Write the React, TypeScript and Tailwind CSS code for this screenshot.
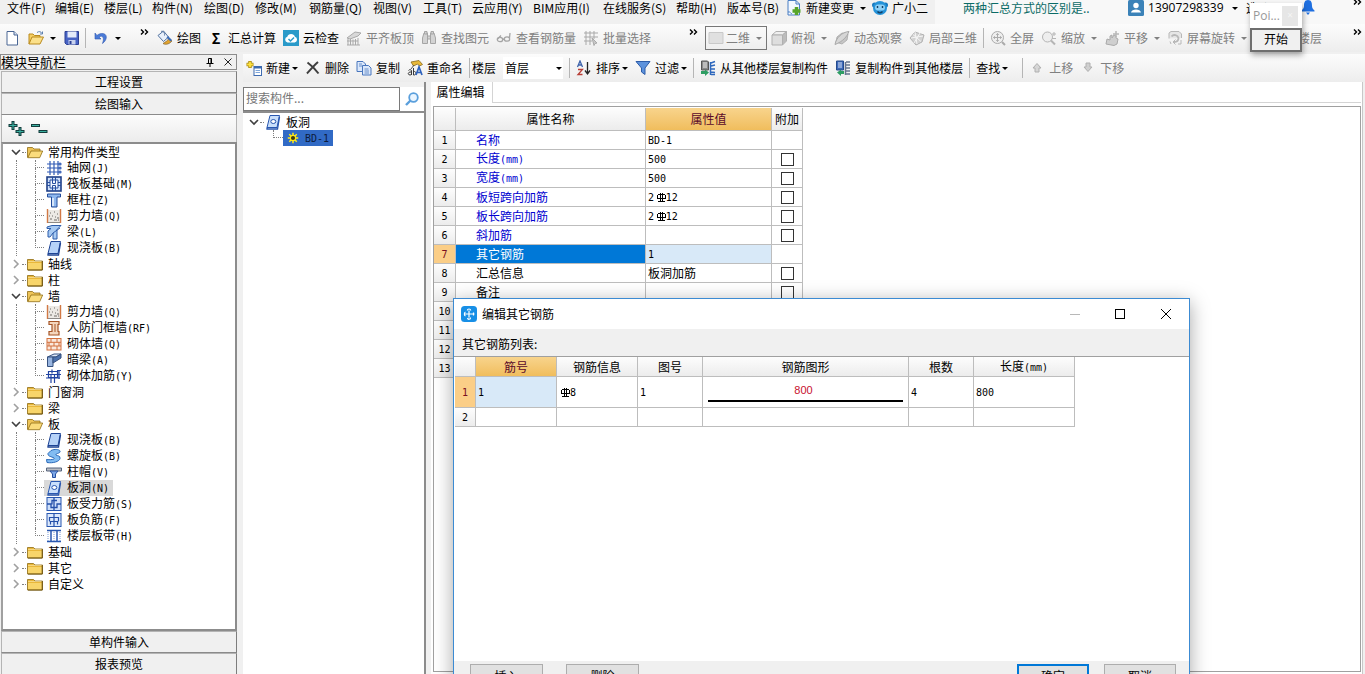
import { useState, type ReactNode } from "react";

const UI = "font-['Noto_Sans_CJK_SC',sans-serif]";

function Svg({ children, className = "size-4" }: { children: ReactNode; className?: string }) {
  return (
    <svg viewBox="0 0 16 16" fill="none" className={`shrink-0 ${className}`} aria-hidden="true">
      {children}
    </svg>
  );
}

const icons: Record<string, ReactNode> = {
  file: (
    <>
      <path d="M3 1.5h7l3.5 3.5v10H3z" fill="#fff" stroke="#4a6694" />
      <path d="M10 1.5V5h3.5" stroke="#4a6694" fill="#d5e0f2" />
    </>
  ),
  open: (
    <>
      <path d="M1 14V4h4l1.500 1.500H12V8" fill="#f6cf63" stroke="#b98a1f" />
      <path d="M1 14l3-7h11.500l-3.500 7z" fill="#fbe08a" stroke="#b98a1f" />
      <path d="M9 2.500c2-1.500 4-1 5 1M14.500 1.500v2.500h-2.500" stroke="#5b7fae" />
    </>
  ),
  save: (
    <>
      <path d="M1 1.500h13.500v13H2.500L1 13z" fill="#4763c4" stroke="#2b3f94" />
      <path d="M3.500 1.500h9v6h-9z" fill="#e4ebfa" />
      <path d="M4.500 10h7v4.500h-7z" fill="#c8d2ee" />
      <path d="M5.500 11h2v3h-2z" fill="#2b3f94" />
    </>
  ),
  undo: <path d="M2 3v6h6L6 7c3-2 6 0 3.500 6.500C15 9.500 14.500 3 8.500 3.500 6.500 3.700 5 4.500 4 5.500z" fill="#4a7bd8" stroke="#2f57b0" strokeWidth=".6" />,
  paint: (
    <>
      <path d="M1 5.500L6.500 1l5 6-5 4.500z" fill="#e8f0fb" stroke="#51719f" />
      <path d="M4 1.500c2-1 4 1 3.500 4" stroke="#51719f" />
      <path d="M6 13.500c3 2 7 0 9-2.500l-3-3c-1 3-4 4-6 5.500z" fill="#e2a32c" stroke="#80602c" strokeWidth=".7" />
      <path d="M11 6l4 4-1.500 1.500-4-4z" fill="#3c6cb8" />
    </>
  ),
  cloud: (
    <>
      <rect width="16" height="16" fill="#2a9ac9" />
      <path d="M4.500 12.500a3 3 0 01-.2-5.800 4 4 0 017.600 0 3 3 0 01-.2 5.800z" fill="#fff" />
      <path d="M5.500 9l2 2 3.500-3.500" stroke="#2a9ac9" strokeWidth="1.500" />
    </>
  ),
  alignTop: (
    <g stroke="#a9a9a9">
      <path d="M1 8l8-6 6 1-3 3-8 3z" fill="#d8d8d8" />
      <path d="M2 9v6M4.500 9v6M7 9.500V15M9.500 9v6M12 8v7M1 15h13" />
      <path d="M1 11h11" />
    </g>
  ),
  find: (
    <g fill="#d3d3d3" stroke="#a5a5a5">
      <path d="M3 3h3.500v10.500h-5V8zM13 3H9.500v10.500h5V8z" />
      <path d="M6.500 6h3v3h-3zM3.500 1.500h2.500V4H3.500zM10 1.500h2.500V4H10z" />
    </g>
  ),
  glasses: (
    <g stroke="#a5a5a5" strokeWidth="1.300">
      <ellipse cx="4" cy="9.500" rx="2.700" ry="2.200" />
      <ellipse cx="11" cy="9" rx="2.700" ry="2.200" />
      <path d="M6.500 9.500L8.500 9M1.500 9L5 5.500M13.500 8l.5-5" />
    </g>
  ),
  batch: (
    <g stroke="#a9a9a9">
      <path d="M1 3h14M1 7h14M1 11h8M3 1v14M7 1v14M11 1v8" />
      <path d="M9 8l5 5-2 .5L11 15.500z" fill="#c8c8c8" />
    </g>
  ),
  screen: <path d="M1 2.500h14v11H1z" fill="#e0e0e0" stroke="#c9c9c9" />,
  cube: (
    <>
      <path d="M1 5l4-3.500h10.500L11.500 5z" fill="#efefef" stroke="#b0b0b0" />
      <path d="M1 5h10.500v10H1z" fill="#dedede" stroke="#b0b0b0" />
      <path d="M11.500 5l4-3.500v9.500l-4 4z" fill="#bcbcbc" stroke="#b0b0b0" />
    </>
  ),
  orbit: (
    <>
      <path d="M3 7l5-4 6 1-1 6-5 4-6-2z" fill="#c6c6c6" stroke="#b2b2b2" />
      <path d="M1 14.500C2 8 8 2 15 1.500c-2 5-6 10-14 13z" fill="#d6d6d6" stroke="#a8a8a8" />
    </>
  ),
  local3d: (
    <>
      <path d="M1 8l5-6 9 3-2 7-6 3z" fill="#d2d2d2" stroke="#b2b2b2" />
      <path d="M4 4.500l8 7M6 2l2 12M2 8l12-2M11 3L5 13" stroke="#f5f5f5" />
    </>
  ),
  full: (
    <g stroke="#ababab">
      <circle cx="7.500" cy="7.500" r="6" fill="#eee" />
      <path d="M7.500 3.500v8M3.500 7.500h8M6.300 5l1.200-1.500L8.700 5M6.300 10l1.200 1.500L8.700 10M5 6.300L3.500 7.500 5 8.700M10 6.300l1.500 1.200L10 8.700" />
      <path d="M12 12l3 3" strokeWidth="2" />
    </g>
  ),
  zoom: (
    <g stroke="#b5b5b5">
      <circle cx="6.500" cy="7" r="5" fill="#eee" />
      <path d="M10 10.500l4 4" strokeWidth="2" />
      <path d="M11 4h4M13 2v4M11 8.500h4" />
    </g>
  ),
  pan: (
    <>
      <path d="M2 14l1-5 3 1V6l2-1v3l2-3 2 1v2l2 1-1 5-3 1.500z" fill="#cfcfcf" stroke="#aaa" />
      <path d="M12 1v6M9 4h6" stroke="#b8b8b8" strokeWidth="1.500" />
    </>
  ),
  rotate: (
    <g stroke="#b8b8b8">
      <path d="M2 8.500V3l2-1.500h8L14.500 4v4" fill="#e6e6e6" />
      <path d="M4.500 6.500a4 4 0 017 1.500c0 2.500-2 4-4.500 4" strokeWidth="1.800" />
      <path d="M8.500 9.500L6 12l2.500 2.500M3 11.500l1 2.500M14 10v4h-3" />
    </g>
  ),
  floors: <path d="M2 13h12M2 9h12M2 5h12" stroke="#b0b0b0" strokeWidth="2" />,
  create: (
    <>
      <path d="M4 1v7M.500 4.500h7" stroke="#a98a10" strokeWidth="3.400" />
      <path d="M4 1.700v5.600M1.200 4.500h5.600" stroke="#ffe23e" strokeWidth="1.800" />
      <rect x="8" y="6.500" width="7.500" height="9" fill="#fff" stroke="#3d6bb0" />
      <path d="M8 7.500h7.500" stroke="#3d6bb0" strokeWidth="2" />
      <path d="M9.500 10.500h4.500M9.500 12.500h4.500" stroke="#7ea6da" />
    </>
  ),
  remove: <path d="M2.500 2.500C6 5 10 9 13.500 13.500M13 2C9 5.500 6 9 2 13.500" stroke="#3f3f3f" strokeWidth="2" />,
  copy: (
    <g fill="#dbe8fb" stroke="#4976bd">
      <path d="M1 1.500h6l2.500 2.500v7.500H1z" />
      <path d="M6.500 5.500h6L15 8v7H6.500z" />
      <path d="M8.500 9h4M8.500 11h4.500M8.500 13h4.500M3 4h3M3 6h3" strokeWidth=".8" />
    </g>
  ),
  rename: (
    <>
      <path d="M4 2l8-1.500 3.500 4-3 1.500-2-2-4 2z" fill="#e8b93a" stroke="#8b6b1a" strokeWidth=".8" />
      <path d="M7 5l-3 4" stroke="#555" />
      <path d="M1.500 10.500c1-1.500 3-1 3 .5V15M4.500 12c-4-.5-4 3-1.500 3 1 0 1.500-.8 1.500-1M6.500 8v7c3 .5 3.500-4 0-3.500" stroke="#3a3a3a" />
      <path d="M9 15l3-8 3 8M10 12.500h4" stroke="#2f63bd" strokeWidth="1.700" />
    </>
  ),
  sort: (
    <>
      <path d="M1.500 7l2.500-6 2.500 6M2.300 5h3.500" stroke="#3c62ab" strokeWidth="1.300" />
      <path d="M2 9.500h4.500L2 14.500h4.500" stroke="#b83e36" strokeWidth="1.300" />
      <path d="M11.500 2v11.500M9 10.500l2.500 3.500 2.500-3.500" stroke="#222" strokeWidth="1.300" />
    </>
  ),
  filter: <path d="M1 1.500h14L10 8v6.500L6.500 12V8z" fill="#5d92dc" stroke="#2d5ca8" />,
  fromFloor: (
    <>
      <path d="M1.500 1h6l1 1v8h-7z" fill="#8a8a8a" stroke="#555" />
      <path d="M3 3h4M3 5h4M3 7h4" stroke="#eee" />
      <path d="M11 3l4-1.500M11 6l4-1M11 9h4M11 12l4 .5M11 14.500h4M10.500 2v13" stroke="#2e68bd" strokeWidth="1.500" />
      <path d="M1 11v3h4v2l4-3.500L5 9.500V11z" fill="#2e9d63" />
    </>
  ),
  toFloor: (
    <>
      <path d="M1.500 1h7v9h-7z" fill="#3d69b9" stroke="#244a8c" />
      <path d="M3 3h4M3 5h4M3 7h4" stroke="#dce6f8" />
      <path d="M11 2h4M11 5h4M11 8h4M11 11h4M11 14h4M10.500 2v13" stroke="#66758f" strokeWidth="1.500" />
      <path d="M9 11v3H6v2l-4-3.500L6 9.500V11z" fill="#2e9d63" />
    </>
  ),
  up: <path d="M8 3.500L12 8h-2v4H6V8H4z" fill="#d6d6d6" stroke="#b0b0b0" />,
  down: <path d="M8 11.500L12 7h-2V3H6v4H4z" fill="#cfcfcf" stroke="#b0b0b0" />,
  change: (
    <>
      <path d="M2 .500h8L13.500 4v11H2z" fill="#f3f8ff" stroke="#4a7fc4" />
      <path d="M10 .500V4h3.500" stroke="#4a7fc4" />
      <path d="M10.500 7v8M6.500 11h8" stroke="#57a52b" strokeWidth="3.500" />
      <path d="M2 12c2-1 3 2 4 2" stroke="#4a7fc4" />
    </>
  ),
  robot: (
    <>
      <circle cx="2.500" cy="5" r="2.500" fill="#1777bd" />
      <circle cx="13.500" cy="5" r="2.500" fill="#1777bd" />
      <circle cx="8" cy="8" r="7" fill="#2492d8" />
      <rect x="3" y="4.500" width="10" height="6" rx="3" fill="#8fd0f5" />
      <path d="M5.500 6v2M10.500 6v2M5.500 11.500c1.500 1.800 3.500 1.800 5 0" stroke="#123f66" strokeWidth="1.400" />
    </>
  ),
  user: (
    <>
      <rect width="16" height="16" rx="1.500" fill="#3b82b8" />
      <circle cx="8" cy="5.500" r="2.700" fill="#fff" />
      <path d="M3 12.500c.5-4 9.500-4 10 0z" fill="#fff" />
    </>
  ),
  bell: (
    <>
      <path d="M8 0c3.500 0 4 3 4 6 0 2 1 3 2.500 4.500v1h-13v-1C3 9 4 8 4 6c0-3 .5-6 4-6z" fill="#1f6fe0" />
      <path d="M6 12.500h4l-2 2.500z" fill="#1f6fe0" />
    </>
  ),
  search: (
    <>
      <circle cx="9.500" cy="6.500" r="4.300" fill="#eaf5ff" stroke="#5a9fdc" strokeWidth="1.800" />
      <path d="M6.500 9.500L2 14" stroke="#5a9fdc" strokeWidth="2.400" />
    </>
  ),
  folder: (
    <>
      <path d="M.500 3.500h6L8 5h7.500v9H.500z" fill="#e9b73a" stroke="#8f6c14" strokeWidth=".8" />
      <path d="M1 6h14v-.500H1z" fill="#fff6cf" />
      <path d="M1 7h14v6.500H1z" fill="#f8d56a" />
      <path d="M15.200 5v9H1" stroke="#6b5212" />
    </>
  ),
  folderOpen: (
    <>
      <path d="M.500 13.500v-10h5L7 5h6v3" fill="#eec458" stroke="#8f6c14" strokeWidth=".8" />
      <path d="M.800 13.700L4 7h11.700l-3 6.700z" fill="#fbdc7c" stroke="#8f6c14" strokeWidth=".8" />
    </>
  ),
  grid: (
    <g stroke="#315bb5" strokeWidth="1.200">
      <path d="M1 4h12M1 8h12M1 12h12M4 1v14M8 1v14M12 1v14" />
      <circle cx="14" cy="4" r="1" fill="#fff" />
      <circle cx="14" cy="8" r="1" fill="#fff" />
      <circle cx="14" cy="12" r="1" fill="#fff" />
    </g>
  ),
  raft: (
    <>
      <rect x="1" y="1" width="14" height="14" fill="#cfe0fa" stroke="#1e3f87" strokeWidth="1.600" />
      <path d="M4 4h8v8H4z" fill="#f2f7ff" stroke="#274f9f" />
      <path d="M6.500 1v6.500h3V1M6.500 15V9.500h3V15M1 6.500h3M12 6.500h3M1 9.500h3M12 9.500h3" stroke="#274f9f" />
    </>
  ),
  column: (
    <>
      <path d="M1.500 2h13v3h-3.500v10H5.500V5h-4z" fill="#8fb8ee" stroke="#224c9c" />
      <path d="M7 6v8" stroke="#fff" strokeWidth="1.300" />
    </>
  ),
  wall: (
    <>
      <rect x="1.500" y="2" width="13" height="12" fill="#ece9e4" />
      <path d="M1.500 1v14M14.500 1v14" stroke="#d27945" strokeWidth="1.400" />
      <path d="M4 5h1M8 4h1M11 6h1M6 8h1M9 9h1M4 11h2M8 12h3M11 10h2M12 12h1M3 8h1" stroke="#6f6a66" />
      <path d="M2 14.500h12" stroke="#8d8a86" />
    </>
  ),
  beam: (
    <>
      <path d="M1 3l5-1.500h9l-4 4V15H7V9l-3 4H2V7l3-2.500H1z" fill="#a7caf3" stroke="#2d5dab" />
      <path d="M7 9l7-5" stroke="#2d5dab" />
    </>
  ),
  slab: (
    <>
      <path d="M5 1.500h9.500L12 13.500H2z" fill="#b6d2f8" stroke="#1d4394" />
      <path d="M2 13.500v1.500h10.500L14.500 3" stroke="#1d4394" strokeWidth="1.300" />
    </>
  ),
  doorWall: (
    <>
      <path d="M3 1.500h10v3h-1v7h1V15H3v-3.500h3v-7H3z" fill="#f4d6bd" stroke="#a65527" strokeWidth="1.200" />
      <path d="M9 4v8" stroke="#a65527" />
    </>
  ),
  brick: (
    <>
      <rect x="1" y="2.500" width="14" height="11.500" fill="#fae8dc" stroke="#d2713e" />
      <path d="M1 6.300h14M1 10h14M5 2.500v3.800M11 2.500v3.800M8 6.300V10M3 6.300V10M13 6.300V10M5 10v4M11 10v4" stroke="#d2713e" />
    </>
  ),
  hiddenBeam: (
    <>
      <path d="M1.500 5L8 2h7l-5 3z" fill="#dfe9f8" stroke="#35507e" />
      <path d="M1.500 5H7v9.500H1.500z" fill="#98b5e0" stroke="#35507e" />
      <path d="M7 5h3l5-3v4L7 11z" fill="#4d72ad" stroke="#35507e" />
    </>
  ),
  rebar: (
    <g stroke="#2043a2" strokeWidth="1.200">
      <path d="M2.500 3.500h9v6h-9zM0 6.500h15M0 10h14M5 6v9M8.500 6v9M13 2v9M11 2.500h4" />
      <path d="M6 1.500v4" />
    </g>
  ),
  spiral: <path d="M5 2.500c4-2 10-1 9 1.500-.5 1.500-5 1.500-4 3 1.500 1 4.500.5 4 3.500-.5 3-7 5-13 4l-.5-3c4 .5 9 0 7.500-1.500C5.500 8.500 1.500 8.500 2 5.500z" fill="#82bcf2" stroke="#2b69b9" />,
  cap: (
    <>
      <path d="M.500 4h15v3H.500z" fill="#b9bcc2" stroke="#56657e" />
      <path d="M4 7h8l-2.500 3v3.500h-3V10z" fill="#7ba6e6" stroke="#274f9f" />
    </>
  ),
  hole: (
    <>
      <path d="M5 1.500h9.500L12 13.500H2z" fill="#c9dffb" stroke="#2857b0" />
      <path d="M2 13.500v1.500h10.500L14.500 3" stroke="#2857b0" strokeWidth="1.300" />
      <ellipse cx="8.300" cy="7.500" rx="2.500" ry="2" fill="#fff" stroke="#2857b0" />
    </>
  ),
  stress: (
    <>
      <rect x="1" y="1.500" width="14" height="13" fill="#cfe0fa" stroke="#2857b0" />
      <path d="M1 8h4v3.500h6V8h4M8 1.500v13M11 4.500H6v4" stroke="#2450aa" strokeWidth="1.300" />
    </>
  ),
  negative: (
    <>
      <rect x="1" y="1.500" width="14" height="13" fill="#dce9fc" stroke="#2857b0" />
      <path d="M3.500 9V5.500h9V9M3.500 9.500h9M8 1.500v13M4.500 9v3.500M11.500 9v3.500" stroke="#2450aa" strokeWidth="1.200" />
    </>
  ),
  strip: (
    <>
      <path d="M1 2.500h14M1 13.500h14" stroke="#2857b0" strokeWidth="1.600" />
      <path d="M5 3v10M11 3v10" stroke="#2857b0" strokeWidth="1.500" />
      <path d="M8 4v9M2 4v9M14 4v9" stroke="#7a9bd6" strokeDasharray="1 1" />
    </>
  ),
  sun: (
    <>
      <path d="M8 1v14M1 8h14M3 3l10 10M13 3L3 13" stroke="#ffe815" strokeWidth="2" />
      <circle cx="8" cy="8" r="3.500" fill="#3c3a10" stroke="#ffe815" strokeWidth="1.500" />
    </>
  ),
};

function Icon({ name, className }: { name: string; className?: string }) {
  return <Svg className={className}>{icons[name]}</Svg>;
}

function Caret({ className = "" }: { className?: string }) {
  return (
    <svg viewBox="0 0 6 3" className={`h-[3px] w-1.5 shrink-0 fill-current ${className}`} aria-hidden="true">
      <path d="M0 0h6L3 3z" />
    </svg>
  );
}

function Chevrons() {
  return (
    <svg viewBox="0 0 9 6" className="h-1.5 w-[9px] shrink-0" fill="none" stroke="#000" strokeWidth="1.400" aria-hidden="true">
      <path d="M1 .500L3.500 3 1 5.500M5 .500L7.500 3 5 5.500" />
    </svg>
  );
}

// Chinese stays at 12px, latin runs get a half-width face
function Song({ text }: { text: string }) {
  return (
    <>
      {text.split(/([\x21-\x7e]+)/).map((part, i) =>
        i % 2 ? (
          <span key={i} className="font-['DejaVu_Sans_Mono',monospace] text-[10px]">
            {part}
          </span>
        ) : (
          part
        ),
      )}
    </>
  );
}

function Tool({ icon, label, caret, muted }: { icon?: string; label: string; caret?: boolean; muted?: boolean }) {
  return (
    <button type="button" className={`flex shrink-0 items-center gap-1 ${muted ? "text-[#808080]" : "text-black"}`}>
      {icon === "sigma" ? <span className="w-4 text-center text-sm leading-4 font-bold">Σ</span> : icon && <Icon name={icon} />}
      <span>{label}</span>
      {caret && <Caret className={muted ? "ml-0.5" : "-ml-0.5"} />}
    </button>
  );
}

function Sep() {
  return <span className="-mx-px h-5 w-px shrink-0 bg-[#b5b5b5]" />;
}

const menus = [
  { label: "文件(F)", width: "w-12" },
  { label: "编辑(E)", width: "w-[49px]" },
  { label: "楼层(L)", width: "w-12" },
  { label: "构件(N)", width: "w-[52px]" },
  { label: "绘图(D)", width: "w-[51px]" },
  { label: "修改(M)", width: "w-[54px]" },
  { label: "钢筋量(Q)", width: "w-16" },
  { label: "视图(V)", width: "w-[50px]" },
  { label: "工具(T)", width: "w-[49px]" },
  { label: "云应用(Y)", width: "w-[61px]" },
  { label: "BIM应用(I)", width: "w-[70px]" },
  { label: "在线服务(S)", width: "w-[73px]" },
  { label: "帮助(H)", width: "w-[51px]" },
  { label: "版本号(B)", width: "w-[52px]" },
];

function MenuBar() {
  return (
    <nav className="flex h-6 items-start overflow-hidden whitespace-nowrap">
      <div className="flex h-4 shrink-0 items-center pl-[7px]">
        {menus.map((m) => (
          <button type="button" key={m.label} className={`shrink-0 text-left ${m.width}`}>
            {m.label}
          </button>
        ))}
      </div>
      <div className="flex h-4 shrink-0 items-center px-[7px]">
        <Tool icon="change" label="新建变更" />
        <Caret className="mx-1.5" />
        <Tool icon="robot" label="广小二" />
      </div>
      <div className="flex h-6 grow items-start bg-[#f8f8f8] pl-7">
        <div className="flex h-4 grow items-center">
          <a href="#tips" className="w-[165px] text-[#0b6b66]">
            两种汇总方式的区别是..
          </a>
          <button type="button" className="flex items-center gap-1">
            <Icon name="user" />
            <span className="w-20 text-left font-['Open_Sans','Noto_Sans_CJK_SC',sans-serif]">13907298339</span>
            <Caret />
          </button>
          <button type="button" className="ml-2 w-[54px] text-left">
            造价豆
          </button>
          <Icon name="bell" />
          <span className="mr-[3px] mb-3 ml-auto">
            <Chevrons />
          </span>
        </div>
      </div>
    </nav>
  );
}

function MainToolbar() {
  return (
    <div className="flex h-7 items-center overflow-hidden bg-linear-to-b from-[#fcfcfc] to-[#ededed] whitespace-nowrap">
      <div className="flex w-[152px] shrink-0 items-center pl-1">
        <button type="button" aria-label="新建">
          <Icon name="file" />
        </button>
        <button type="button" aria-label="打开" className="ml-2 flex items-center gap-1.5">
          <Icon name="open" />
          <Caret />
        </button>
        <button type="button" aria-label="保存" className="mr-1.5 ml-2">
          <Icon name="save" />
        </button>
        <Sep />
        <button type="button" aria-label="撤销" className="ml-2 flex items-center gap-1.5">
          <Icon name="undo" />
          <Caret />
        </button>
        <span className="mb-3 ml-[19px]">
          <Chevrons />
        </span>
      </div>
      <div className="flex w-[553px] shrink-0 items-center gap-[7px] pl-[5px]">
        <Tool icon="paint" label="绘图" />
        <Tool icon="sigma" label="汇总计算" />
        <Tool icon="cloud" label="云检查" />
        <Tool icon="alignTop" label="平齐板顶" muted />
        <Tool icon="find" label="查找图元" muted />
        <Tool icon="glasses" label="查看钢筋量" muted />
        <Tool icon="batch" label="批量选择" muted />
        <span className="mr-[7px] mb-3 ml-auto">
          <Chevrons />
        </span>
      </div>
      <div className="relative flex h-6 w-[62px] shrink-0 items-center border border-[#777] text-[#808080]">
        <Icon name="screen" className="ml-0.5 size-4" />
        <select aria-label="视图模式" className="w-full appearance-none bg-transparent pl-0.5 outline-none">
          <option>二维</option>
          <option>三维</option>
        </select>
        <Caret className="pointer-events-none absolute right-1" />
      </div>
      <div className="flex grow items-center gap-[7px] pl-1">
        <Tool icon="cube" label="俯视" caret muted />
        <Tool icon="orbit" label="动态观察" muted />
        <Tool icon="local3d" label="局部三维" muted />
        <Sep />
        <Tool icon="full" label="全屏" muted />
        <Tool icon="zoom" label="缩放" caret muted />
        <Tool icon="pan" label="平移" caret muted />
        <Tool icon="rotate" label="屏幕旋转" caret muted />
        <Tool icon="floors" label="选择楼层" muted />
        <span className="mr-[3px] mb-3 ml-auto">
          <Chevrons />
        </span>
      </div>
    </div>
  );
}

type Node = { label: string; icon?: string; selected?: boolean; children?: Node[] };

const modules: Node[] = [
  {
    label: "常用构件类型",
    children: [
      { label: "轴网(J)", icon: "grid" },
      { label: "筏板基础(M)", icon: "raft" },
      { label: "框柱(Z)", icon: "column" },
      { label: "剪力墙(Q)", icon: "wall" },
      { label: "梁(L)", icon: "beam" },
      { label: "现浇板(B)", icon: "slab" },
    ],
  },
  { label: "轴线" },
  { label: "柱" },
  {
    label: "墙",
    children: [
      { label: "剪力墙(Q)", icon: "wall" },
      { label: "人防门框墙(RF)", icon: "doorWall" },
      { label: "砌体墙(Q)", icon: "brick" },
      { label: "暗梁(A)", icon: "hiddenBeam" },
      { label: "砌体加筋(Y)", icon: "rebar" },
    ],
  },
  { label: "门窗洞" },
  { label: "梁" },
  {
    label: "板",
    children: [
      { label: "现浇板(B)", icon: "slab" },
      { label: "螺旋板(B)", icon: "spiral" },
      { label: "柱帽(V)", icon: "cap" },
      { label: "板洞(N)", icon: "hole", selected: true },
      { label: "板受力筋(S)", icon: "stress" },
      { label: "板负筋(F)", icon: "negative" },
      { label: "楼层板带(H)", icon: "strip" },
    ],
  },
  { label: "基础" },
  { label: "其它" },
  { label: "自定义" },
];

function Twisty({ open }: { open: boolean }) {
  return (
    <svg viewBox="0 0 10 10" className="size-2.5 shrink-0" fill="none" strokeWidth="1.600" aria-hidden="true">
      {open ? <path d="M1 3l4 4 4-4" stroke="#404040" /> : <path d="M3 1l4 4-4 4" stroke="#a0a0a0" />}
    </svg>
  );
}

function ModuleTree() {
  return (
    <ul className="grow overflow-hidden border-2 border-[#8c8c8c] border-l-[#a0a0a0] bg-white pl-2 leading-4">
      {modules.map((group) => (
        <li key={group.label}>
          <div className="flex h-4 items-center">
            <Twisty open={!!group.children} />
            <span className="mx-px w-1 border-t border-dotted border-[#808080]" />
            <Icon name={group.children ? "folderOpen" : "folder"} />
            <span className="ml-[5px]">{group.label}</span>
          </div>
          {group.children && (
            <ul className="ml-[5px]">
              {group.children.map((item, i) => (
                <li key={item.label} className="flex h-4 items-center border-l border-dotted border-[#808080] pl-[18px]">
                  <span className="flex h-4 w-[9px] flex-col">
                    <span className="h-2 border-b border-l border-dotted border-[#808080]" />
                    <span
                      className={`h-2 border-dotted border-[#808080] ${i < group.children!.length - 1 ? "border-l" : ""}`}
                    />
                  </span>
                  <span className={`flex h-4 items-center pr-1 pl-0.5 ${item.selected ? "bg-[#d9d9d9]" : ""}`}>
                    <Icon name={item.icon!} />
                    <span className="ml-[5px]">
                      <Song text={item.label} />
                    </span>
                  </span>
                </li>
              ))}
            </ul>
          )}
        </li>
      ))}
    </ul>
  );
}

function DockButton({ children }: { children: ReactNode }) {
  return (
    <button
      type="button"
      className="h-[22px] w-full shrink-0 border border-t-[#b4b4b4] border-r-[#7d7d7d] border-b-[#8a8a8a] border-l-[#b4b4b4] bg-[#f0f0f0] leading-5"
    >
      {children}
    </button>
  );
}

function ModuleDock() {
  return (
    <aside className="flex w-[237px] shrink-0 flex-col">
      <header className="mb-px flex h-4 shrink-0 items-center border border-[#8c8c8c] text-[13px] leading-3.5">
        <h2 className="grow">模块导航栏</h2>
        <button type="button" aria-label="固定" className="mr-2.5">
          <svg viewBox="0 0 8 9" className="h-[9px] w-2" fill="none" stroke="#000" aria-hidden="true">
            <path d="M2.500.500h3v4.500M2.500.500V5M5 .500V5M.500 5.500h7M4 6v3" />
          </svg>
        </button>
        <button type="button" aria-label="关闭" className="mr-1">
          <svg viewBox="0 0 8 8" className="size-2" fill="none" stroke="#222" aria-hidden="true">
            <path d="M.500.500l7 7M7.500.500l-7 7" />
          </svg>
        </button>
      </header>
      <div className="-mb-px flex min-h-0 grow flex-col pl-px">
        <DockButton>工程设置</DockButton>
        <DockButton>绘图输入</DockButton>
        <div className="flex h-[27px] shrink-0 items-center gap-1.5 border-x border-[#b4b4b4] bg-linear-to-b from-[#fcfcfc] to-[#ececec] pl-1.5">
          <button type="button" aria-label="全部展开">
            <svg viewBox="0 0 17 15" className="h-[15px] w-[17px]" fill="none" aria-hidden="true">
              <path d="M5 0v9M.500 4.500h9M12 6v9M7.500 10.500h9" stroke="#143c3c" strokeWidth="3" />
              <path d="M5 1v7M1.500 4.500h7M12 7v7M8.500 10.500h7" stroke="#3bb0a0" />
            </svg>
          </button>
          <button type="button" aria-label="全部折叠">
            <svg viewBox="0 0 17 15" className="h-[15px] w-[17px]" fill="none" aria-hidden="true">
              <path d="M0 4.500h9M7.500 10.500h9" stroke="#143c3c" strokeWidth="3" />
              <path d="M1 4.500h7M8.500 10.500h7" stroke="#3bb0a0" />
            </svg>
          </button>
        </div>
        <ModuleTree />
        <DockButton>单构件输入</DockButton>
        <DockButton>报表预览</DockButton>
      </div>
    </aside>
  );
}

function ComponentToolbar() {
  return (
    <div className="flex h-7 shrink-0 items-center gap-[7px] overflow-hidden bg-linear-to-b from-[#fcfcfc] to-[#ededed] pl-[3px] whitespace-nowrap">
      <Tool icon="create" label="新建" caret />
      <Tool icon="remove" label="删除" />
      <Tool icon="copy" label="复制" />
      <Tool icon="rename" label="重命名" />
      <Sep />
      <label htmlFor="floor" className="-ml-1">
        楼层
      </label>
      <div className="relative flex h-[22px] w-[60px] items-center bg-white">
        <select id="floor" className="w-full appearance-none bg-transparent pl-0.5 outline-none">
          <option>首层</option>
          <option>基础层</option>
        </select>
        <Caret className="pointer-events-none absolute right-px" />
      </div>
      <Sep />
      <Tool icon="sort" label="排序" caret />
      <Tool icon="filter" label="过滤" caret />
      <Sep />
      <Tool icon="fromFloor" label="从其他楼层复制构件" />
      <Tool icon="toFloor" label="复制构件到其他楼层" />
      <Sep />
      <Tool label="查找" caret />
      <span className="w-px" />
      <Sep />
      <Tool icon="up" label="上移" muted />
      <Tool icon="down" label="下移" muted />
    </div>
  );
}

function ComponentList() {
  const [query, setQuery] = useState("");
  return (
    <section className="flex w-[183px] shrink-0 flex-col border-r-2 border-[#8c8c8c] bg-white">
      <div className="flex h-[31px] shrink-0 items-end border-b-2 border-[#8c8c8c] bg-[#f0f0f0]">
        <input
          aria-label="搜索构件"
          placeholder="搜索构件..."
          value={query}
          onChange={(e) => setQuery(e.target.value)}
          className="h-6 w-[157px] border border-[#7a7a7a] bg-white px-0.5 pb-1 outline-none placeholder:text-[#777]"
        />
        <button type="button" aria-label="搜索" className="flex h-6 grow items-center justify-center bg-white">
          <Icon name="search" />
        </button>
      </div>
      <ul className="pt-px pl-1.5 leading-4">
        <li className="flex h-4 items-center">
          <Twisty open />
          <span className="mx-px w-1 border-t border-dotted border-[#808080]" />
          <Icon name="hole" />
          <span className="ml-[5px]">板洞</span>
        </li>
        <li className="flex h-4 items-center pl-6">
          <span className="mb-2 h-2 w-2.5 border-b border-l border-dotted border-[#808080]" />
          <span className="flex h-4 items-center bg-[#316ac5] pr-1 pl-1 text-[#0d1c3c]">
            <Icon name="sun" className="size-3" />
            <span className="ml-1.5">
              <Song text="BD-1" />
            </span>
          </span>
        </li>
      </ul>
    </section>
  );
}

function Rebar() {
  return (
    <svg
      viewBox="0 0 9 9"
      className="mb-px inline size-[9px]"
      fill="none"
      stroke="#000"
      shapeRendering="crispEdges"
      role="img"
      aria-label="三级钢"
    >
      <path d="M1 1.500h7M0 5.500h9M.500 2v3M8.500 2v3M3.500 0v8M5.500 0v8M1 8.500h7" />
    </svg>
  );
}

type Prop = { name: string; value?: ReactNode; extra?: boolean; blue?: boolean; selected?: boolean };

const props: Prop[] = [
  { name: "名称", value: <Song text="BD-1" />, blue: true },
  { name: "长度(mm)", value: <Song text="500" />, extra: true, blue: true },
  { name: "宽度(mm)", value: <Song text="500" />, extra: true, blue: true },
  { name: "板短跨向加筋", value: <><Song text="2" /> <Rebar /><Song text="12" /></>, extra: true, blue: true },
  { name: "板长跨向加筋", value: <><Song text="2" /> <Rebar /><Song text="12" /></>, extra: true, blue: true },
  { name: "斜加筋", extra: true, blue: true },
  { name: "其它钢筋", value: <Song text="1" />, selected: true },
  { name: "汇总信息", value: "板洞加筋", extra: true },
  { name: "备注", extra: true },
  { name: "" },
  { name: "" },
  { name: "" },
  { name: "" },
];

const cell = "border-r border-b border-[#bdbdbd]";
const head = "border-r border-b border-[#bdbdbd] bg-linear-to-b from-[#fdfdfd] to-[#ececec] font-normal";
const hotHead = "border-r border-b border-[#bdbdbd] bg-linear-to-b from-[#f8d48c] to-[#f0bd5c] font-normal text-[#5a0a2a]";

function PropertyTable() {
  return (
    <table className="w-[369px] table-fixed border-separate border-spacing-0 leading-4">
      <colgroup>
        <col className="w-[22px]" />
        <col className="w-[190px]" />
        <col className="w-[126px]" />
        <col className="w-[31px]" />
      </colgroup>
      <thead>
        <tr className="h-[23px]">
          <th className={head} />
          <th className={head}>属性名称</th>
          <th className={hotHead}>属性值</th>
          <th className={head}>附加</th>
        </tr>
      </thead>
      <tbody>
        {props.map((p, i) => (
          <tr key={i} className="h-[19px]">
            <th className={p.selected ? `${cell} bg-[#fbce87] font-normal text-[#7a1020]` : head}>
              <Song text={String(i + 1)} />
            </th>
            <td
              className={`${cell} pl-5 ${p.selected ? "bg-[#0078d7] text-white" : p.blue ? "text-[#0000d0]" : "text-black"}`}
            >
              <Song text={p.name} />
            </td>
            <td className={`${cell} pl-0.5 ${p.selected ? "bg-[#d8e9f8]" : ""}`}>{p.value}</td>
            <td className={cell}>
              {p.extra && (
                <input
                  type="checkbox"
                  aria-label={`附加${p.name}`}
                  className="mx-auto block size-[13px] appearance-none border border-[#333] bg-white checked:bg-[#333]"
                />
              )}
            </td>
          </tr>
        ))}
      </tbody>
    </table>
  );
}

function PropertyEditor() {
  return (
    <section className="ml-[5px] flex min-w-0 grow flex-col border-r border-[#c8c8c8] bg-white pr-px">
      <div role="tablist" className="flex h-[21px] shrink-0 border-b border-[#d4d4d4]">
        <button
          type="button"
          role="tab"
          aria-selected
          className="-mb-px h-[21px] w-[62px] border-r border-[#d4d4d4] bg-white pr-0.5 pb-0.5"
        >
          属性编辑
        </button>
      </div>
      <div className="mt-[3px] mb-0.5 ml-0.5 grow overflow-hidden border border-[#a0a0a0] pt-px">
        <PropertyTable />
      </div>
    </section>
  );
}

function RebarDialog() {
  return (
    <div
      role="dialog"
      aria-labelledby="dialog-title"
      className="absolute top-[298px] left-[453px] flex h-[401px] w-[737px] flex-col border border-[#3c8bd3] bg-[#f0f0f0] shadow-[0_4px_18px_rgba(0,0,0,0.35)]"
    >
      <header className="flex h-[30px] shrink-0 items-center bg-white pl-[7px]">
        <svg viewBox="0 0 16 16" className="size-4" fill="none" aria-hidden="true">
          <rect width="16" height="16" rx="3.500" fill="#178fe6" />
          <path d="M3 8h10.500M8 4.500v7M6.300 4.500C6.500 2.500 9.500 2.500 9.700 4.500M9.500 11.500c.2 2-2.500 2.500-3 .5M4.500 6C3 6.500 3 9.500 4.500 10M12.500 6.500v3" stroke="#fff" strokeWidth="1.200" />
        </svg>
        <h2 id="dialog-title" className="ml-[5px] grow">
          编辑其它钢筋
        </h2>
        <button type="button" aria-label="最小化" className="flex h-full w-[45px] items-center justify-center" disabled>
          <span className="h-px w-2.5 bg-[#b8b8b8]" />
        </button>
        <button type="button" aria-label="最大化" className="flex h-full w-[45px] items-center justify-center">
          <span className="size-2.5 border border-black" />
        </button>
        <button type="button" aria-label="关闭" className="flex h-full w-[47px] items-center justify-center">
          <svg viewBox="0 0 10 10" className="size-2.5" fill="none" stroke="#000" aria-hidden="true">
            <path d="M0 0l10 10M10 0L0 10" />
          </svg>
        </button>
      </header>
      <p className="flex h-[27px] shrink-0 items-center pt-0.5 pl-2">其它钢筋列表:</p>
      <div className="h-[305px] shrink-0 border-t border-[#a0a0a0] bg-white pl-px">
        <table className="w-[620px] table-fixed border-separate border-spacing-0 leading-4">
          <colgroup>
            <col className="w-[21px]" />
            <col className="w-[81px]" />
            <col className="w-[81px]" />
            <col className="w-[65px]" />
            <col className="w-[206px]" />
            <col className="w-[65px]" />
            <col className="w-[101px]" />
          </colgroup>
          <thead>
            <tr className="h-5">
              <th className={head} />
              <th className={hotHead}>筋号</th>
              <th className={head}>钢筋信息</th>
              <th className={head}>图号</th>
              <th className={head}>钢筋图形</th>
              <th className={head}>根数</th>
              <th className={head}>
                <Song text="长度(mm)" />
              </th>
            </tr>
          </thead>
          <tbody>
            <tr className="h-[31px]">
              <th className={`${cell} bg-[#fbce87] font-normal text-[#7a1020]`}>
                <Song text="1" />
              </th>
              <td className={`${cell} bg-[#d8e9f8] pl-0.5`}>
                <Song text="1" />
              </td>
              <td className={`${cell} pl-1`}>
                <Rebar />
                <Song text="8" />
              </td>
              <td className={`${cell} pl-0.5`}>
                <Song text="1" />
              </td>
              <td className={`${cell} px-[5px] text-center`}>
                <div className="border-b-2 border-black pr-1 pb-0.5 font-['Liberation_Sans',sans-serif] text-[11px] text-[#c8102e]">
                  800
                </div>
              </td>
              <td className={`${cell} pl-0.5`}>
                <Song text="4" />
              </td>
              <td className={`${cell} pl-0.5`}>
                <Song text="800" />
              </td>
            </tr>
            <tr className="h-[19px]">
              <th className={head}>
                <Song text="2" />
              </th>
              <td className={cell} />
              <td className={cell} />
              <td className={cell} />
              <td className={cell} />
              <td className={cell} />
              <td className={cell} />
            </tr>
          </tbody>
        </table>
      </div>
      <footer className="flex shrink-0 items-start pt-[3px] pr-[13px] pl-4">
        <button type="button" className="h-[23px] w-[73px] border border-[#adadad] bg-[#e1e1e1]">
          插入
        </button>
        <button type="button" className="ml-[23px] h-[23px] w-[73px] border border-[#adadad] bg-[#e1e1e1]">
          删除
        </button>
        <button type="button" className="ml-auto h-[23px] w-[72px] border-2 border-[#0078d7] bg-[#e1e1e1]">
          确定
        </button>
        <button type="button" className="ml-[15px] h-[23px] w-[72px] border border-[#adadad] bg-[#e1e1e1]">
          取消
        </button>
      </footer>
    </div>
  );
}

function FloatingStarter() {
  return (
    <div className="absolute top-[3px] left-[1250px] w-[52px] shadow-[1px_3px_6px_rgba(0,0,0,0.35)]">
      <div className="flex h-[25px] items-center justify-between bg-white pr-1 pl-[3px] font-['Open_Sans',sans-serif] text-[#999]">
        <span>Poi...</span>
        <span className="flex h-5 w-4 items-center justify-center bg-[#e6e6e6] text-[10px] text-[#f5f5f5]">×</span>
      </div>
      <button type="button" className="h-6 w-full border-2 border-[#6e6e6e] bg-[#f0f0f0] pb-0.5 leading-4">
        开始
      </button>
    </div>
  );
}

export default function App() {
  return (
    <div className={`relative flex h-screen flex-col overflow-hidden bg-[#f0f0f0] text-xs text-black ${UI}`}>
      <MenuBar />
      <MainToolbar />
      <div className="mt-0.5 flex min-h-0 grow">
        <ModuleDock />
        <div className="ml-1.5 flex min-w-0 grow flex-col">
          <ComponentToolbar />
          <div className="flex min-h-0 grow pr-0.5">
            <ComponentList />
            <PropertyEditor />
          </div>
        </div>
      </div>
      <RebarDialog />
      <FloatingStarter />
    </div>
  );
}
